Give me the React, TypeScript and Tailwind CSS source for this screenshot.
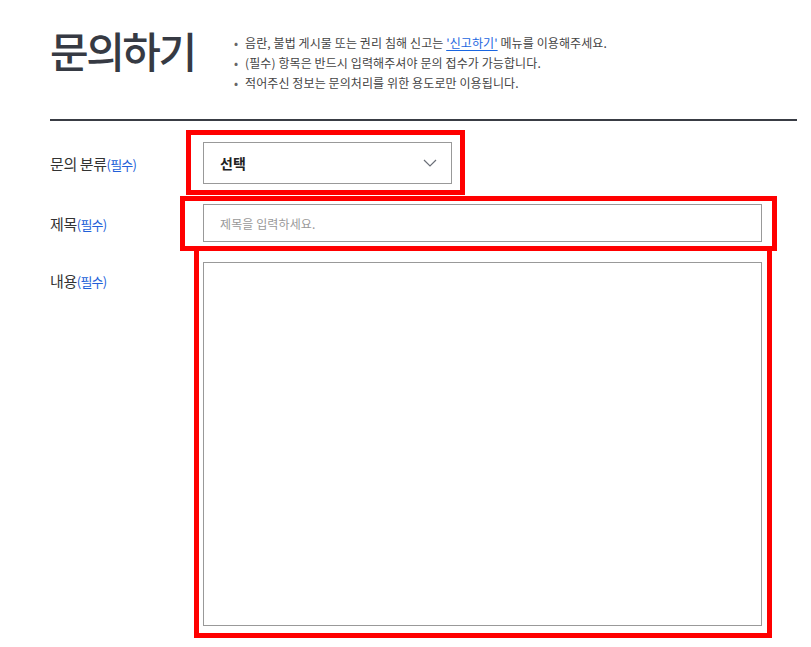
import React from "react";

const font = { fontFamily: '"Noto Sans CJK KR", "Noto Sans", sans-serif' };

const notices = [
  <>
    음란, 불법 게시물 또는 권리 침해 신고는{" "}
    <a href="#" className="text-[#1a66e0] underline underline-offset-2">'신고하기'</a> 메뉴를 이용해주세요.
  </>,
  <>(필수) 항목은 반드시 입력해주셔야 문의 접수가 가능합니다.</>,
  <>적어주신 정보는 문의처리를 위한 용도로만 이용됩니다.</>,
];

const Label = ({ text }: { text: string }) => (
  <span className="text-[15px] tracking-[-0.4px] text-[#333]">
    {text}
    <span className="text-[13px] tracking-[-0.8px] text-[#2260d8]">(필수)</span>
  </span>
);

export default function App() {
  return (
    <div className="relative min-h-[647px] bg-white pl-[50px] pr-[14px]" style={font}>
      {/* Header */}
      <div className="flex h-[121px] items-start border-b-2 border-[#393c44] pt-[29px]">
        <h1 className="w-[184px] text-[42px] leading-[42px] font-medium tracking-[-2.5px] text-[#363a43]">문의하기</h1>
        <ul className="mt-[4px] text-[12px] leading-[20px] tracking-[0.1px] text-[#444]">
          {notices.map((n, i) => (
            <li key={i} className="flex">
              <span className="w-[11px] text-[#666]">•</span>
              <span>{n}</span>
            </li>
          ))}
        </ul>
      </div>

      {/* Form */}
      <div className="mt-[21px] flex flex-col gap-5">
        <div className="flex items-center">
          <div className="w-[153px]"><Label text="문의 분류" /></div>
          <button className="flex h-[42px] w-[249px] items-center justify-between border border-[#999] pl-[16px] pr-[14px]">
            <span className="text-[14px] font-bold text-[#222]">선택</span>
            <svg width="14" height="8" viewBox="0 0 14 8" fill="none">
              <polyline points="1,1 7,7 13,1" stroke="#6b6f78" strokeWidth="1.2" />
            </svg>
          </button>
        </div>
        <div className="flex items-center">
          <div className="w-[153px]"><Label text="제목" /></div>
          <input
            placeholder="제목을 입력하세요."
            className="h-[38px] w-[559px] border border-[#999] px-[16px] text-[12px] tracking-[0.1px] text-[#333] placeholder-[#999] outline-none"
          />
        </div>
        <div className="flex items-start">
          <div className="w-[153px] pt-[6px]"><Label text="내용" /></div>
          <textarea className="h-[364px] w-[559px] resize-none border border-[#999] outline-none" />
        </div>
      </div>

      {/* Red annotation boxes */}
      <div className="pointer-events-none absolute left-[186px] top-[130px] h-[65px] w-[279px] border-[5px] border-[#ff0000]" />
      <div className="pointer-events-none absolute left-[180px] top-[196px] h-[55px] w-[597px] border-[5px] border-[#ff0000]" />
      <div className="pointer-events-none absolute left-[194px] top-[246px] h-[392px] w-[578px] border-[5px] border-[#ff0000]" />
    </div>
  );
}
